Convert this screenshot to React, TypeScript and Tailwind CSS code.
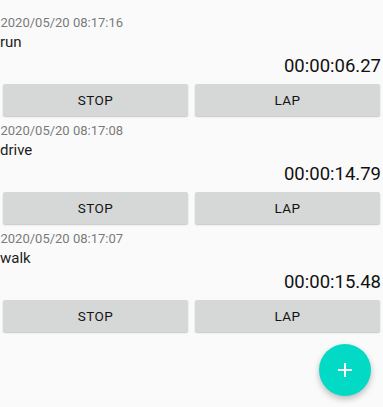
import React from "react";

const items = [
  { date: "2020/05/20 08:17:16", name: "run", time: "00:00:06.27" },
  { date: "2020/05/20 08:17:08", name: "drive", time: "00:00:14.79" },
  { date: "2020/05/20 08:17:07", name: "walk", time: "00:00:15.48" },
];

function Btn({ label }: { label: string }) {
  return (
    <button className="h-[32px] rounded-[2px] bg-[#d6d7d7] shadow-[0_1px_1.5px_rgba(0,0,0,0.22)] text-[13.5px] font-normal tracking-[0.4px] text-[#141414]">
      {label}
    </button>
  );
}

export default function App() {
  return (
    <div
      className="relative h-[407px] w-[383px] overflow-hidden bg-[#fafafa]"
      style={{ fontFamily: "Roboto, 'Liberation Sans', sans-serif" }}
    >
      <div className="pt-[15px]">
        {items.map((it) => (
          <div key={it.date} className="pb-[7px]">
            <div className="h-[16px] pl-[0.5px] text-[13px] leading-[16px] text-[#7a7a7a]">{it.date}</div>
            <div className="h-[22px] text-[15px] leading-[23px] text-[#1c1c1c]">{it.name}</div>
            <div className="mt-[2px] h-[22px] pr-[2px] text-right text-[18.5px] leading-[22px] text-[#111]">{it.time}</div>
            <div className="mt-[7px] grid grid-cols-2 gap-[7px] px-[3px]">
              <Btn label="STOP" />
              <Btn label="LAP" />
            </div>
          </div>
        ))}
      </div>
      <button className="absolute left-[319px] top-[344px] flex h-[52px] w-[52px] items-center justify-center rounded-full bg-[#03dac5] shadow-[0_3px_6px_rgba(0,0,0,0.25)]">
        <svg width="14" height="14" viewBox="0 0 14 14">
          <path d="M7 0v14M0 7h14" stroke="#fff" strokeWidth="2" />
        </svg>
      </button>
    </div>
  );
}
